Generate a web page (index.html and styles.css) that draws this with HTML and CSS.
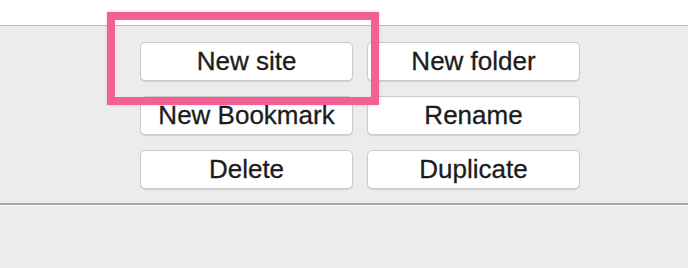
FILE: index.html
```html
<!DOCTYPE html>
<html>
    <head>
        <title>Site Manager</title>
        <link rel="stylesheet" href="styles.css">
    </head>
    <body>
        <div class="topArea"></div>
        <div class="btnPanel">
            <div class="btnGrid">
                <button class="btn">New site</button>
                <button class="btn">New folder</button>
                <button class="btn">New Bookmark</button>
                <button class="btn">Rename</button>
                <button class="btn">Delete</button>
                <button class="btn">Duplicate</button>
            </div>
            <!-- highlight box drawn over the first button -->
            <div class="highlight"></div>
        </div>
        <div class="bottomArea"></div>
    </body>
</html>
```

FILE: styles.css
```css
body{
    margin: 0;
    background-color: #ececec;
    font-family: "Liberation Sans", Arial, sans-serif;
}

.topArea{
    height: 25px;
    background-color: #ffffff;
    border-bottom: 1px solid #b8b8b8;
}

.btnPanel{
    position: relative;
    padding: 16px 0 14px 140px;
    border-bottom: 2px solid #a9a9a9;
}

.btnGrid{
    display: grid;
    grid-template-columns: 213px 213px;
    grid-auto-rows: 39px;
    column-gap: 14px;
    row-gap: 15px;
}

.btn{
    margin: 0;
    padding: 0;
    background-color: #ffffff;
    border: 1px solid #c9c9c9;
    border-radius: 5px;
    box-shadow: 0 1px 1px rgba(0,0,0,0.12);
    font-family: inherit;
    font-size: 26px;
    color: #1c1c1c;
    -webkit-text-stroke: 0.3px #1c1c1c;
    white-space: nowrap;
    overflow: hidden;
}

.highlight{
    position: absolute;
    left: 107px;
    top: -14px;
    width: 256px;
    height: 77px;
    border: 8px solid #f45f95;
    box-shadow: 0 0 3px rgba(0,0,0,0.15);
}

.bottomArea{
    border-top: 1px solid #fafafa;
    height: 64px;
}
```
